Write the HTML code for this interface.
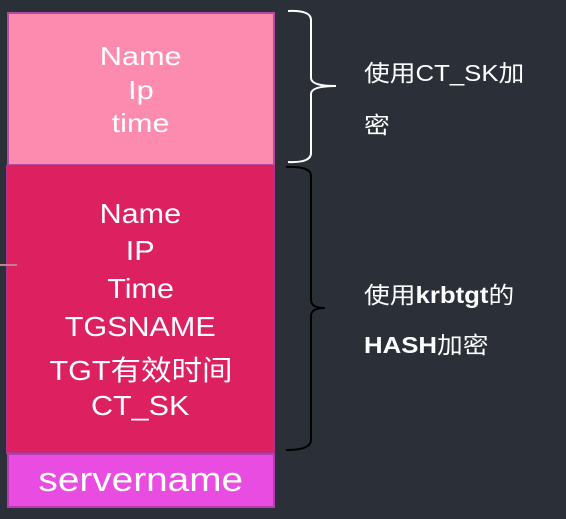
<!DOCTYPE html>
<html><head><meta charset="utf-8"><style>
html,body{margin:0;padding:0;}
body{width:566px;height:519px;background:#2b3038;position:relative;overflow:hidden;font-family:"Liberation Sans","Noto Sans CJK SC",sans-serif;}
.box{position:absolute;box-sizing:border-box;}
.t{position:absolute;left:0;width:100%;text-align:center;color:#fff;white-space:nowrap;}
.t span{display:inline-block;}
.r{position:absolute;color:#fff;font-size:23px;white-space:nowrap;transform:translateY(-50%) scaleX(1.12);transform-origin:left center;}
</style></head><body>
<div class="box" style="left:7px;top:12px;width:268px;height:154px;background:#fd8bb0;border:2px solid #b24aa0;">
  <div class="t" style="top:27px;font-size:26px;"><span style="transform:scaleX(1.18)">Name</span></div>
  <div class="t" style="top:61px;font-size:26px;"><span style="transform:scaleX(1.18)">Ip</span></div>
  <div class="t" style="top:94px;font-size:26px;"><span style="transform:scaleX(1.18)">time</span></div>
</div>
<div class="box" style="left:6px;top:165px;width:269px;height:289px;background:#dc2060;border:2px solid #b43090;border-top:none;">
  <div class="t" style="top:33px;font-size:28px;"><span style="transform:scaleX(1.09)">Name</span></div>
  <div class="t" style="top:70px;font-size:28px;"><span style="transform:scaleX(1.09)">IP</span></div>
  <div class="t" style="top:108px;font-size:28px;"><span style="transform:scaleX(1.09)">Time</span></div>
  <div class="t" style="top:146px;font-size:28px;"><span style="transform:scaleX(1.09)">TGSNAME</span></div>
  <div class="t" style="top:184px;font-size:28px;"><span style="transform:scaleX(1.09)">TGT有效时间</span></div>
  <div class="t" style="top:225px;font-size:28px;"><span style="transform:scaleX(1.09)">CT_SK</span></div>
</div>
<div class="box" style="left:7px;top:453px;width:268px;height:55px;background:#e84ce0;border:2px solid #b43cb0;">
  <div class="t" style="top:6px;font-size:34px;"><span style="transform:scaleX(1.14)">servername</span></div>
</div>
<svg style="position:absolute;left:0;top:0" width="566" height="519">
  <path d="M288 11 Q311 10 311 20 L311 78 Q311 86 336 86 Q311 86 311 94 L311 153 Q311 163 288 162" fill="none" stroke="#fff" stroke-width="2"/>
  <path d="M286 167 Q311 166 311 176 L311 300 Q311 308 325 308 Q311 308 311 316 L311 440 Q311 450 286 450" fill="none" stroke="#000" stroke-width="2"/>
  <line x1="0" y1="265" x2="17" y2="265" stroke="#c08090" stroke-width="2"/>
</svg>
<div class="r" style="left:364px;top:71px;">使用CT_SK加</div>
<div class="r" style="left:364px;top:123px;">密</div>
<div class="r" style="left:364px;top:293px;">使用<b>krbtgt</b>的</div>
<div class="r" style="left:364px;top:343px;"><b>HASH</b>加密</div>
</body></html>
